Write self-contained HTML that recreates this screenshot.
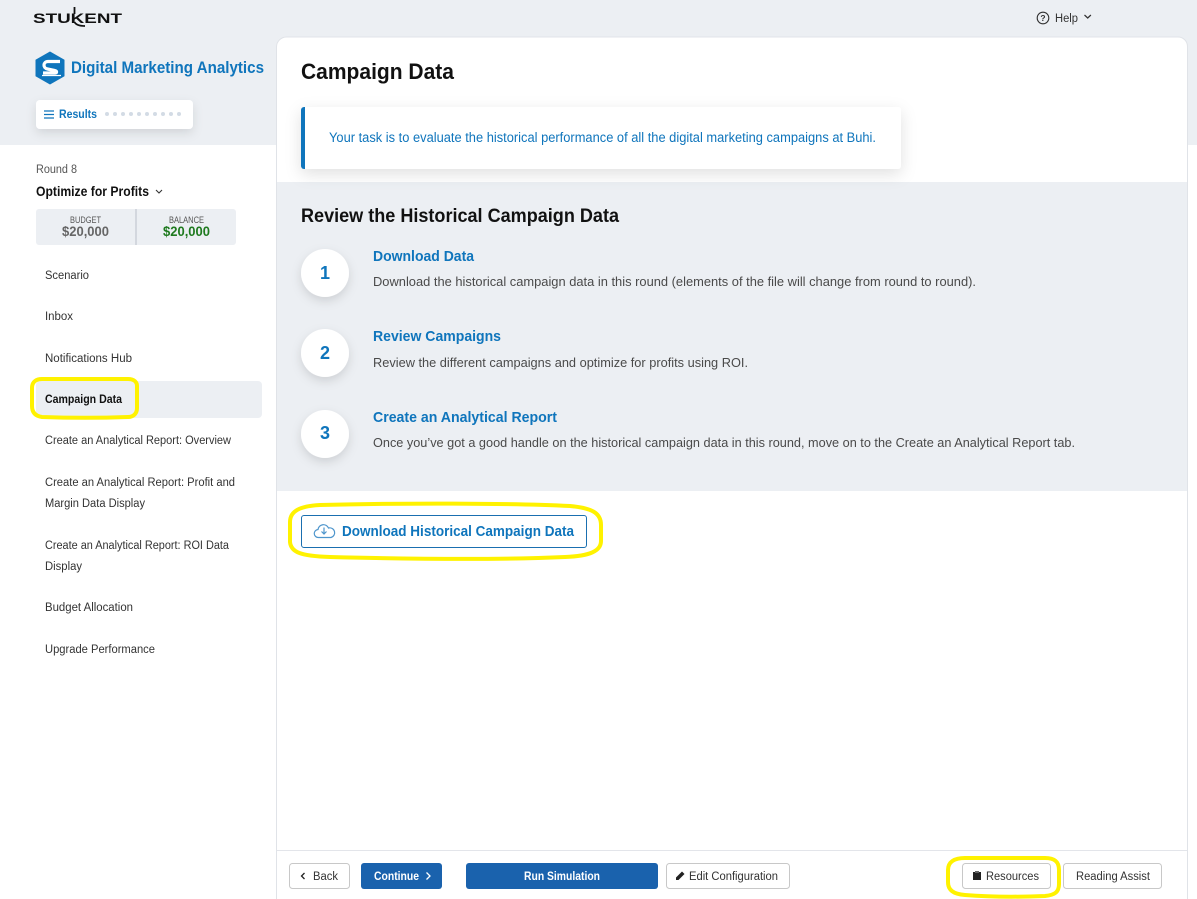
<!DOCTYPE html>
<html lang="en"><head><meta charset="utf-8"><title>Campaign Data</title>
<style>
html,body{margin:0;padding:0;width:1197px;height:899px;overflow:hidden;background:#fff}
svg{display:block}
text{font-family:"Liberation Sans",Arial,sans-serif;white-space:pre}
.b{font-weight:bold}
.blue{fill:#0f75bc}
.dark{fill:#4a4a4a}
.nav{font-size:11.500px;fill:#333}
.btn{font-size:11.500px;fill:#333}
</style></head><body>
<svg width="1197" height="899" viewBox="0 0 1197 899" xmlns="http://www.w3.org/2000/svg">
<defs>
<filter id="s1" x="-20%" y="-50%" width="140%" height="220%"><feDropShadow dx="0" dy="5" stdDeviation="8" flood-color="#000" flood-opacity=".12"/></filter>
<filter id="s2" x="-50%" y="-50%" width="200%" height="220%"><feDropShadow dx="0" dy="4" stdDeviation="5" flood-color="#000" flood-opacity=".13"/></filter>
<filter id="s3" x="-20%" y="-50%" width="140%" height="220%"><feDropShadow dx="0" dy="4" stdDeviation="5" flood-color="#000" flood-opacity=".11"/></filter>
</defs>
<rect width="1197" height="899" fill="#fff"/>
<rect width="1197" height="145" fill="#eceff3"/>
<!-- main panel -->
<path d="M276.500 899V47a10 10 0 0 1 10-10H1178a9.500 9.500 0 0 1 9.500 9.500V899" fill="#fff" stroke="#e0e3e8"/>
<rect x="277" y="182" width="910" height="309" fill="#eceff3"/>
<!-- logo -->
<text x="33" y="23" font-size="14" class="b" fill="#111" textLength="89" lengthAdjust="spacingAndGlyphs">STUKENT</text>
<path d="M74.500 7V14M74.500 22C76 25 80 26 85 26" fill="none" stroke="#111" stroke-width="1.800"/>
<!-- help -->
<circle cx="1043" cy="18" r="5.800" fill="none" stroke="#333" stroke-width="1.100"/>
<text x="1043" y="21" font-size="8.500" text-anchor="middle" fill="#333" class="b">?</text>
<text x="1055" y="22" font-size="11.500" fill="#333" textLength="23" lengthAdjust="spacingAndGlyphs">Help</text>
<path d="M1084.500 15l3.200 3 3.200-3" fill="none" stroke="#333" stroke-width="1.200"/>
<!-- brand -->
<path d="M50 52l14 8v16l-14 8-14-8V60z" fill="#0f75bc" stroke="#0f75bc" stroke-linejoin="round"/>
<path d="M60 61.500H48c-5 0-5.500 6.500-.5 7.500l7 1.500c3 .7 2.500 2.500 0 2.500H43" fill="none" stroke="#fff" stroke-width="3.200"/>
<path d="M42 75.500H61" stroke="#fff" stroke-width="1.200"/>
<text x="71" y="73" font-size="17" class="b blue" textLength="193" lengthAdjust="spacingAndGlyphs">Digital Marketing Analytics</text>
<rect x="36" y="100" width="157" height="29" rx="4" fill="#fff" filter="url(#s3)"/>
<path d="M44 111h10M44 114.500h10M44 118h10" stroke="#0f75bc" stroke-width="1.200"/>
<text x="59" y="118" font-size="11.500" class="b blue" textLength="38" lengthAdjust="spacingAndGlyphs">Results</text>
<g fill="#d3dbe5"><circle cx="107" cy="114" r="2"/><circle cx="115" cy="114" r="2"/><circle cx="123" cy="114" r="2"/><circle cx="131" cy="114" r="2"/><circle cx="139" cy="114" r="2"/><circle cx="147" cy="114" r="2"/><circle cx="155" cy="114" r="2"/><circle cx="163" cy="114" r="2"/><circle cx="171" cy="114" r="2"/><circle cx="179" cy="114" r="2"/></g>
<!-- round -->
<text x="36" y="173" font-size="11.500" fill="#555" textLength="41" lengthAdjust="spacingAndGlyphs">Round 8</text>
<text x="36" y="196" font-size="13.500" class="b" fill="#111" textLength="113" lengthAdjust="spacingAndGlyphs">Optimize for Profits</text>
<path d="M156 190l3 3 3-3" fill="none" stroke="#333" stroke-width="1.100"/>
<rect x="36" y="209" width="200" height="36" rx="3" fill="#eceff3"/>
<rect x="135" y="209" width="2" height="36" fill="#d3d7de"/>
<text x="70" y="223" font-size="9" fill="#555" textLength="31" lengthAdjust="spacingAndGlyphs">BUDGET</text>
<text x="62" y="236" font-size="13.500" class="b" fill="#666" textLength="47" lengthAdjust="spacingAndGlyphs">$20,000</text>
<text x="169" y="223" font-size="9" fill="#555" textLength="35" lengthAdjust="spacingAndGlyphs">BALANCE</text>
<text x="163" y="236" font-size="13.500" class="b" fill="#1f7a1f" textLength="47" lengthAdjust="spacingAndGlyphs">$20,000</text>
<!-- nav -->
<rect x="36" y="381" width="226" height="37" rx="4" fill="#eceff3"/>
<text x="45" y="279" class="nav" textLength="44" lengthAdjust="spacingAndGlyphs">Scenario</text>
<text x="45" y="320" class="nav" textLength="28" lengthAdjust="spacingAndGlyphs">Inbox</text>
<text x="45" y="362" class="nav" textLength="87" lengthAdjust="spacingAndGlyphs">Notifications Hub</text>
<text x="45" y="403" class="nav b" style="fill:#111" textLength="77" lengthAdjust="spacingAndGlyphs">Campaign Data</text>
<text x="45" y="444" class="nav" textLength="186" lengthAdjust="spacingAndGlyphs">Create an Analytical Report: Overview</text>
<text x="45" y="486" class="nav" textLength="190" lengthAdjust="spacingAndGlyphs">Create an Analytical Report: Profit and</text>
<text x="45" y="507" class="nav" textLength="100" lengthAdjust="spacingAndGlyphs">Margin Data Display</text>
<text x="45" y="549" class="nav" textLength="184" lengthAdjust="spacingAndGlyphs">Create an Analytical Report: ROI Data</text>
<text x="45" y="570" class="nav" textLength="37" lengthAdjust="spacingAndGlyphs">Display</text>
<text x="45" y="611" class="nav" textLength="88" lengthAdjust="spacingAndGlyphs">Budget Allocation</text>
<text x="45" y="653" class="nav" textLength="110" lengthAdjust="spacingAndGlyphs">Upgrade Performance</text>
<!-- main -->
<text x="301" y="79" font-size="22" class="b" fill="#111" textLength="153" lengthAdjust="spacingAndGlyphs">Campaign Data</text>
<rect x="301" y="107" width="600" height="62" rx="3" fill="#fff" filter="url(#s1)"/>
<path d="M305 107h-1a3 3 0 0 0-3 3v56a3 3 0 0 0 3 3h1z" fill="#0f75bc"/>
<text x="329" y="142" font-size="13.500" class="blue" textLength="547" lengthAdjust="spacingAndGlyphs">Your task is to evaluate the historical performance of all the digital marketing campaigns at Buhi.</text>
<text x="301" y="222" font-size="19" class="b" fill="#111" textLength="318" lengthAdjust="spacingAndGlyphs">Review the Historical Campaign Data</text>
<circle cx="325" cy="273" r="24" fill="#fff" filter="url(#s2)"/>
<text x="325" y="279" font-size="18" class="b blue" text-anchor="middle">1</text>
<text x="373" y="261" font-size="15" class="b blue" textLength="101" lengthAdjust="spacingAndGlyphs">Download Data</text>
<text x="373" y="286" font-size="13" class="dark" textLength="603" lengthAdjust="spacingAndGlyphs">Download the historical campaign data in this round (elements of the file will change from round to round).</text>
<circle cx="325" cy="353" r="24" fill="#fff" filter="url(#s2)"/>
<text x="325" y="359" font-size="18" class="b blue" text-anchor="middle">2</text>
<text x="373" y="341" font-size="15" class="b blue" textLength="128" lengthAdjust="spacingAndGlyphs">Review Campaigns</text>
<text x="373" y="367" font-size="13" class="dark" textLength="375" lengthAdjust="spacingAndGlyphs">Review the different campaigns and optimize for profits using ROI.</text>
<circle cx="325" cy="434" r="24" fill="#fff" filter="url(#s2)"/>
<text x="325" y="439" font-size="18" class="b blue" text-anchor="middle">3</text>
<text x="373" y="422" font-size="15" class="b blue" textLength="184" lengthAdjust="spacingAndGlyphs">Create an Analytical Report</text>
<text x="373" y="447" font-size="13" class="dark" textLength="702" lengthAdjust="spacingAndGlyphs">Once you’ve got a good handle on the historical campaign data in this round, move on to the Create an Analytical Report tab.</text>
<!-- download -->
<rect x="301.500" y="515.500" width="285" height="32" rx="2.500" fill="#fff" stroke="#1a6fb0"/>
<path d="M320 537.500h-1.500a4 4 0 0 1-.5-8 5.500 5.500 0 0 1 10.500-1.500 4.500 4.500 0 0 1 2.500 9.500H320z" fill="none" stroke="#4d95cc" stroke-width="1.200"/>
<path d="M324 527.500v6M321.500 531.500l2.500 2.500 2.500-2.500" fill="none" stroke="#4d95cc" stroke-width="1.200"/>
<text x="342" y="536" font-size="14.500" class="b blue" textLength="232" lengthAdjust="spacingAndGlyphs">Download Historical Campaign Data</text>
<!-- footer -->
<rect x="277" y="850" width="910" height="1" fill="#e3e5ea"/>
<rect x="289.500" y="863.500" width="60" height="25" rx="3" fill="#fff" stroke="#c8c8c8"/>
<path d="M304.500 873l-3 3 3 3" fill="none" stroke="#222" stroke-width="1.300"/>
<text x="313" y="880" class="btn" textLength="25" lengthAdjust="spacingAndGlyphs">Back</text>
<rect x="361" y="863" width="81" height="26" rx="3" fill="#1a62ad"/>
<text x="374" y="880" font-size="11.500" fill="#fff" class="b" textLength="45" lengthAdjust="spacingAndGlyphs">Continue</text>
<path d="M426.500 872.500l3.500 3.500-3.500 3.500" fill="none" stroke="#fff" stroke-width="1.300"/>
<rect x="466" y="863" width="192" height="26" rx="3" fill="#1a62ad"/>
<text x="524" y="880" font-size="11.500" fill="#fff" class="b" textLength="76" lengthAdjust="spacingAndGlyphs">Run Simulation</text>
<rect x="666.500" y="863.500" width="123" height="25" rx="3" fill="#fff" stroke="#c8c8c8"/>
<path d="M676 880v-2.500l6-6 2.500 2.500-6 6z" fill="#222"/>
<text x="689" y="880" class="btn" textLength="89" lengthAdjust="spacingAndGlyphs">Edit Configuration</text>
<rect x="962.500" y="863.500" width="88" height="25" rx="3" fill="#fff" stroke="#c8c8c8"/>
<path d="M973.500 872.500h7v7h-7z" fill="#222" stroke="#222"/><rect x="975" y="871" width="4" height="2" fill="#666"/>
<text x="986" y="880" class="btn" textLength="53" lengthAdjust="spacingAndGlyphs">Resources</text>
<rect x="1063.500" y="863.500" width="98" height="25" rx="3" fill="#fff" stroke="#c8c8c8"/>
<text x="1076" y="880" class="btn" textLength="74" lengthAdjust="spacingAndGlyphs">Reading Assist</text>
<!-- highlights -->
<g fill="none" stroke="#fff200" stroke-width="4" stroke-linejoin="round">
<path d="M42 379H128c6 0 9 3 9 7V408c0 5-3 9-9 9C100 418 70 418 42 417 35 416 32 412 32 406V388C32 382 36 379 42 379z"/>
<path d="M320 505C400 503 510 503 570 506 592 508 601 513 601 525V541C601 551 590 556 565 557 500 560 410 559 330 557 300 556 291 552 290 542V522C290 511 300 506 320 505z"/>
<path d="M965 858H1045C1055 858 1059 862 1059 870V884C1059 892 1055 895 1045 896 1020 897 990 897 965 895 953 894 948 890 948 882V870C948 862 954 858 965 858z"/>
</g>
</svg>
</body></html>
